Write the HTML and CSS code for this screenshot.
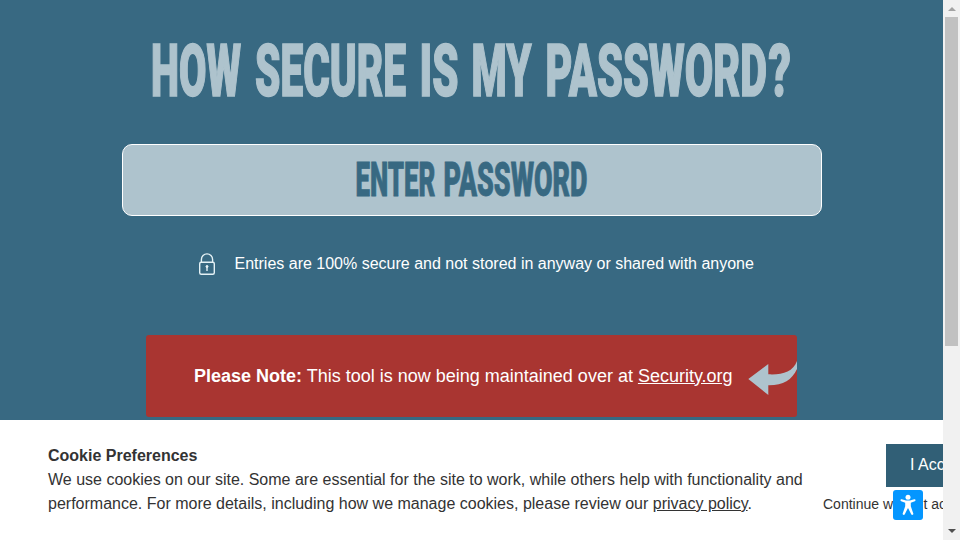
FILE: index.html
```html
<!DOCTYPE html>
<html lang="en">
<head>
  <meta charset="UTF-8">
  <meta name="viewport" content="width=device-width, initial-scale=1.0">
  <title>How Secure Is My Password?</title>
  <link rel="stylesheet" href="styles.css">
</head>
<body>
  <div class="page">
    <main class="content">
      <h1 class="title">
        <svg width="650" height="70" viewBox="147 35 650 70">
          <text x="151" y="95.500" textLength="90" lengthAdjust="spacingAndGlyphs">HOW</text>
          <text x="255" y="95.500" textLength="151" lengthAdjust="spacingAndGlyphs">SECURE</text>
          <text x="419.500" y="95.500" textLength="39" lengthAdjust="spacingAndGlyphs">IS</text>
          <text x="471.500" y="95.500" textLength="60" lengthAdjust="spacingAndGlyphs">MY</text>
          <text x="545.500" y="95.500" textLength="221.500" lengthAdjust="spacingAndGlyphs">PASSWORD</text>
          <text x="768.500" y="95.500" textLength="22.500" lengthAdjust="spacingAndGlyphs">?</text>
        </svg>
      </h1>

      <div class="password-input" role="textbox" aria-label="Enter Password">
        <svg width="240" height="50" viewBox="352 155 240 50">
          <text x="355.500" y="195.500" textLength="80" lengthAdjust="spacingAndGlyphs">ENTER</text>
          <text x="443.500" y="195.500" textLength="144" lengthAdjust="spacingAndGlyphs">PASSWORD</text>
        </svg>
      </div>

      <p class="secure-note">
        <svg class="lock" width="18" height="23" viewBox="0 0 18 23" fill="none" stroke="#e4f1f5" stroke-width="1.4">
          <rect x="1.700" y="9.200" width="14.600" height="12" rx="1.500"/>
          <path d="M3.400 9.200V6.500a5.600 5.600 0 0 1 11.200 0v2.700"/>
          <path d="M9 14v4"/>
          <circle cx="9" cy="13.500" r="1" fill="#fff" stroke-width="1"/>
        </svg>
        <span>Entries are 100% secure and not stored in anyway or shared with anyone</span>
      </p>

      <div class="notice">
        <p><strong>Please Note:</strong> This tool is now being maintained over at <a href="#">Security.org</a></p>
        <svg class="arrow" width="49" height="34" viewBox="0 0 49 34">
          <path fill="#aec3cd" d="M.3 17 20.300 2v10.300C34 13 45 10 49-1v8C44 18 35 23.500 20.300 23.300V33z"/>
        </svg>
      </div>
    </main>

    <section class="cookie-banner">
      <div class="cookie-text">
        <h2>Cookie Preferences</h2>
        <p>We use cookies on our site. Some are essential for the site to work, while others help with functionality and performance. For more details, including how we manage cookies, please review our <a href="#">privacy policy</a>.</p>
      </div>
      <div class="cookie-actions">
        <button class="accept">I Accept</button>
        <a class="decline" href="#">Continue without accepting</a>
      </div>
    </section>

    <button class="accessibility" aria-label="Accessibility">
      <svg width="30" height="30" viewBox="0 0 30 30" fill="#fff">
        <circle cx="15" cy="7.300" r="2.500"/>
        <path d="M8.800 9.200 13 10.600h4l4.200-1.400c1.400-.4 1.900 1.500.6 2L17.800 12.700v3.600l2.500 7.100c.5 1.500-1.500 2.200-2.100.9L15 17.900l-3.200 6.400c-.6 1.300-2.600.6-2.100-.9l2.500-7.100v-3.600l-4-1.500c-1.300-.5-.8-2.400.6-2z"/>
      </svg>
    </button>
  </div>

  <div class="scrollbar">
    <span class="up"></span>
    <span class="thumb"></span>
    <span class="down"></span>
  </div>
</body>
</html>
```
FILE: styles.css
```css
* {
  margin: 0;
  padding: 0;
  box-sizing: border-box;
}

body {
  display: flex;
  height: 540px;
  overflow: hidden;
  font-family: "Liberation Sans", Arial, sans-serif;
  background-color: #386982;
  color: #fff;
}

.page {
  position: relative;
  display: flex;
  flex-direction: column;
  width: 943px;
  height: 540px;
  overflow: hidden;
}

.content {
  display: flex;
  flex-direction: column;
  align-items: center;
  height: 420px;
  padding-top: 35px;
}

.title,
.title svg {
  display: block;
  height: 70px;
}

.title text {
  font: 900 72.5px Roboto, sans-serif;
  fill: #aec3cd;
  stroke: #aec3cd;
  stroke-width: 1.6px;
}

.password-input {
  display: flex;
  align-items: center;
  justify-content: center;
  width: 700px;
  height: 72px;
  margin-top: 39px;
  border: 1px solid #fff;
  border-radius: 10px;
  background-color: #aec3cd;
}

.password-input text {
  font: 900 48.5px Roboto, sans-serif;
  fill: #386982;
  stroke: #386982;
  stroke-width: 0.8px;
}

.secure-note {
  display: flex;
  align-items: center;
  gap: 19px;
  width: 548px;
  height: 24px;
  margin-top: 36px;
  font-size: 16px;
  white-space: nowrap;
}

.lock {
  flex-shrink: 0;
}

.notice {
  display: flex;
  align-items: center;
  justify-content: space-between;
  width: 651px;
  height: 82px;
  margin-top: 59px;
  padding-left: 48px;
  border-radius: 3px;
  background-color: #a93531;
  font-size: 18px;
  white-space: nowrap;
}

.notice a {
  color: #fff;
}

.arrow {
  margin-top: 6px;
  overflow: visible;
}

.cookie-banner {
  display: flex;
  justify-content: space-between;
  height: 120px;
  padding: 24px 0 0 48px;
  background-color: #fff;
  color: #333;
  font-size: 16px;
  line-height: 24px;
}

.cookie-text {
  width: 760px;
}

.cookie-text h2 {
  font-size: 16px;
}

.cookie-text a {
  color: #333;
}

.cookie-actions {
  display: flex;
  flex-direction: column;
  flex-shrink: 0;
  width: 120px;
  white-space: nowrap;
}

.accept {
  align-self: flex-start;
  flex-shrink: 0;
  width: 105px;
  height: 43px;
  margin-left: 63px;
  padding-bottom: 2px;
  border: none;
  background-color: #315f76;
  color: #fff;
  font: 16px "Liberation Sans", Arial, sans-serif;
}

.decline {
  margin-top: 5px;
  color: #333;
  font-size: 14px;
  text-decoration: none;
}

.accessibility {
  position: absolute;
  left: 893px;
  top: 490px;
  width: 30px;
  height: 30px;
  border: none;
  border-radius: 3px;
  background-color: #0496ff;
}

.scrollbar {
  display: flex;
  flex-direction: column;
  align-items: center;
  justify-content: space-between;
  width: 17px;
  height: 540px;
  padding: 7px 0;
  background-color: #f1f1f1;
}

.up,
.down {
  border: 4px solid transparent;
}

.up {
  border-top: none;
  border-bottom-color: #a3a3a3;
}

.down {
  border-bottom: none;
  border-top-color: #505050;
}

.thumb {
  width: 13px;
  height: 329px;
  margin: 6px 0 auto;
  background-color: #c1c1c1;
}
```
